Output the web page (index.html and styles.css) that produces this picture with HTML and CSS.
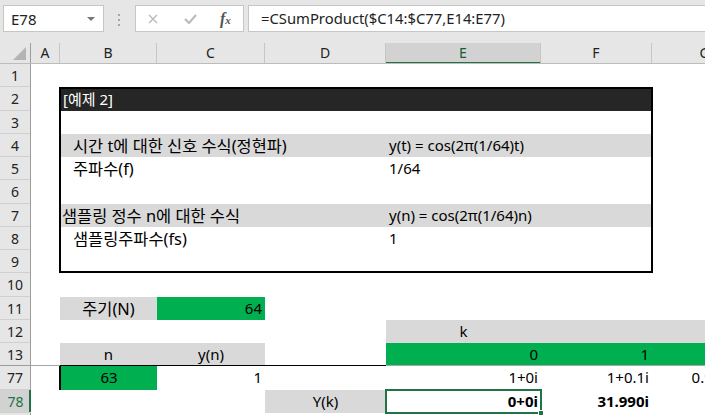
FILE: index.html
```html
<!DOCTYPE html>
<html>
<head>
  <meta charset="utf-8">
  <link rel="stylesheet" href="styles.css">
</head>
<body>
  <div class="toolbar">
    <div class="namebox">
      <span>E78</span>
      <span class="caret"></span>
    </div>
    <div class="grip"><i></i><i></i><i></i></div>
    <div class="fx-buttons">
      <svg class="btn-x" width="10" height="10" viewBox="0 0 10 10">
        <path d="M1 1 L9 9 M9 1 L1 9" stroke="#b9b9b9" stroke-width="1.4" fill="none"/>
      </svg>
      <svg class="btn-ok" width="13" height="10" viewBox="0 0 13 10">
        <path d="M1 5 L5 9 L12 1" stroke="#b9b9b9" stroke-width="2" fill="none"/>
      </svg>
      <span class="fx">f<small>x</small></span>
    </div>
    <div class="formula">=CSumProduct($C14:$C77,E14:E77)</div>
  </div>

  <div class="colheads">
    <div class="ch corner">
      <svg width="13" height="13" viewBox="0 0 13 13"><polygon points="13,0 13,13 0,13" fill="#b4b4b4"/></svg>
    </div>
    <div class="ch w-a">A</div>
    <div class="ch w-b">B</div>
    <div class="ch w-c">C</div>
    <div class="ch w-d">D</div>
    <div class="ch w-e active">E</div>
    <div class="ch w-f">F</div>
    <div class="ch w-g">G</div>
  </div>

  <div class="body">
    <div class="rowheads">
      <div class="rh">1</div>
      <div class="rh">2</div>
      <div class="rh">3</div>
      <div class="rh">4</div>
      <div class="rh">5</div>
      <div class="rh">6</div>
      <div class="rh">7</div>
      <div class="rh">8</div>
      <div class="rh">9</div>
      <div class="rh">10</div>
      <div class="rh">11</div>
      <div class="rh">12</div>
      <div class="rh freeze">13</div>
      <div class="rh">77</div>
      <div class="rh active">78</div>
      <div class="rh"></div>
    </div>

    <div class="cells">
      <div class="row"></div>

      <div class="box">
        <div class="brow title ko">[예제 2]</div>
        <div class="brow"></div>
        <div class="brow band">
          <span class="label indent ko">시간 t에 대한 신호 수식(정현파)</span>
          <span class="value">y(t) = cos(2π(1/64)t)</span>
        </div>
        <div class="brow">
          <span class="label indent ko">주파수(f)</span>
          <span class="value">1/64</span>
        </div>
        <div class="brow"></div>
        <div class="brow band">
          <span class="label ko">샘플링 정수 n에 대한 수식</span>
          <span class="value">y(n) = cos(2π(1/64)n)</span>
        </div>
        <div class="brow">
          <span class="label indent ko">샘플링주파수(fs)</span>
          <span class="value">1</span>
        </div>
        <div class="brow last"></div>
      </div>

      <div class="row"></div>

      <div class="row">
        <div class="c"></div>
        <div class="c gray center ko">주기(N)</div>
        <div class="c green right">64</div>
      </div>

      <div class="row">
        <div class="c"></div>
        <div class="c"></div>
        <div class="c"></div>
        <div class="c"></div>
        <div class="c gray center">k</div>
        <div class="c gray"></div>
        <div class="c gray"></div>
      </div>

      <div class="row freeze">
        <div class="c"></div>
        <div class="c gray center edge">n</div>
        <div class="c gray center edge">y(n)</div>
        <div class="c edge"></div>
        <div class="c green right">0</div>
        <div class="c green right">1</div>
        <div class="c green"></div>
      </div>

      <div class="row">
        <div class="c"></div>
        <div class="c green center thick-left">63</div>
        <div class="c right">1</div>
        <div class="c"></div>
        <div class="c right">1+0i</div>
        <div class="c right">1+0.1i</div>
        <div class="c right">0.98+0.2i</div>
      </div>

      <div class="row">
        <div class="c"></div>
        <div class="c"></div>
        <div class="c"></div>
        <div class="c gray center">Y(k)</div>
        <div class="c right bold selected">0+0i<span class="handle"></span></div>
        <div class="c right bold">31.990i</div>
        <div class="c"></div>
      </div>
    </div>
  </div>
</body>
</html>
```

FILE: styles.css
```css
* {
  box-sizing: border-box;
}
body {
  margin: 0;
  width: 705px;
  height: 415px;
  overflow: hidden;
  background: #fff;
  font-family: "Noto Sans", "Noto Sans CJK KR", sans-serif;
  color: #000;
}

/* formula bar */
.toolbar {
  height: 38px;
  background: #e6e6e6;
  display: flex;
  align-items: flex-start;
  padding-top: 5px;
}
.namebox {
  margin-left: 3px;
  width: 101px;
  height: 27px;
  background: #fff;
  border: 1px solid #c6c6c6;
  display: flex;
  align-items: center;
  justify-content: space-between;
  padding: 0 8px 0 7px;
  font-size: 15px;
  color: #222;
}
.caret {
  width: 0;
  height: 0;
  border-left: 4px solid transparent;
  border-right: 4px solid transparent;
  border-top: 4px solid #777;
}
.grip {
  margin: 9px 0 0 14px;
  width: 2px;
  display: flex;
  flex-direction: column;
  gap: 3px;
}
.grip i {
  display: block;
  width: 2px;
  height: 2px;
  background: #a6a6a6;
}
.fx-buttons {
  margin-left: 15px;
  width: 109px;
  height: 27px;
  background: #fff;
  border: 1px solid #c6c6c6;
  display: flex;
  align-items: center;
  padding-left: 12px;
}
.btn-ok {
  margin-left: 26px;
}
.fx {
  margin-left: 23px;
  font-family: "Liberation Serif", serif;
  font-style: italic;
  font-weight: bold;
  font-size: 16px;
  color: #555;
}
.fx small {
  font-size: 11px;
}
.formula {
  margin-left: 4px;
  flex: 1;
  height: 27px;
  background: #fff;
  border: 1px solid #c6c6c6;
  border-right: none;
  padding-left: 12px;
  line-height: 24px;
  font-size: 14.8px;
  color: #222;
}

/* column headers */
.colheads {
  height: 26px;
  background: #e6e6e6;
  display: flex;
  align-items: flex-end;
  border-bottom: 1px solid #bcbcbc;
  overflow: hidden;
}
.ch {
  height: 20px;
  border-right: 1px solid #c6c6c6;
  text-align: center;
  font-size: 14px;
  line-height: 20px;
  color: #222;
  flex-shrink: 0;
}
.ch.corner {
  width: 31px;
  border-right-color: #9c9c9c;
  display: flex;
  align-items: flex-end;
  justify-content: flex-end;
  padding: 0 4px 3px 0;
}
.ch.active {
  background: #d2d2d2;
  border-bottom: 2px solid #217346;
  color: #185c37;
  height: 21px;
  margin-bottom: -1px;
}
.w-a { width: 29px; }
.w-b { width: 97px; }
.w-c { width: 108px; }
.w-d { width: 121px; }
.w-e { width: 155px; }
.w-f { width: 111px; }
.w-g { width: 106px; }

/* sheet body */
.body {
  display: flex;
}
.rowheads {
  width: 31px;
  flex-shrink: 0;
  background: #e6e6e6;
  border-right: 1px solid #9c9c9c;
}
.rh {
  height: 23.25px;
  border-bottom: 1px solid #d0d0d0;
  text-align: center;
  font-size: 14px;
  line-height: 23px;
  color: #222;
}
.rh.freeze {
  border-bottom-color: #9c9c9c;
}
.rh.active {
  background: #d2d2d2;
  color: #217346;
  box-shadow: inset -2px 0 #217346;
  margin-right: -1px;
}
.cells {
  flex: 1;
  overflow: hidden;
}
.row {
  height: 23.25px;
  display: grid;
  grid-template-columns: 29px 97px 108px 121px 155px 111px 106px;
}
.c {
  font-size: 15px;
  line-height: 23px;
  padding: 0 3px;
  white-space: nowrap;
  overflow: hidden;
}
.row.freeze .c {
  border-bottom: 1px solid #a6a6a6;
}
.row.freeze .c.edge {
  border-bottom-color: #000;
}
.gray { background: #d9d9d9; }
.green { background: #00b050; }
.center { text-align: center; }
.right { text-align: right; }
.bold { font-weight: bold; }
.ko { font-size: 16.4px; }
.thick-left {
  border-left: 2px solid #000;
  margin-left: -1px;
}
.selected {
  position: relative;
  overflow: visible;
  outline: 2px solid #217346;
  outline-offset: -1px;
}
.handle {
  position: absolute;
  right: -3px;
  bottom: -3px;
  width: 6px;
  height: 6px;
  background: #217346;
  border: 1px solid #fff;
}

/* example box */
.box {
  margin-left: 28px;
  width: 594px;
  height: 186px;
  border: 2px solid #000;
  display: flex;
  flex-direction: column;
}
.brow {
  height: 23.25px;
  flex-shrink: 0;
  display: grid;
  grid-template-columns: 325px 1fr;
  font-size: 15px;
  line-height: 23px;
  white-space: nowrap;
}
.brow.title {
  height: 21.25px;
  line-height: 21px;
  background: #262626;
  color: #fff;
  padding-left: 2px;
  display: block;
}
.brow.last {
  flex: 1;
}
.band {
  background: #d9d9d9;
}
.label {
  padding-left: 1px;
}
.label.indent {
  padding-left: 12px;
}
.value {
  padding-left: 3px;
}
```
